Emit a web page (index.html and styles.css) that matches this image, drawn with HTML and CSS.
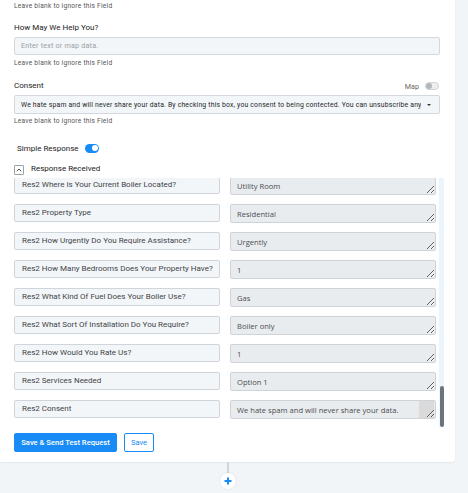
FILE: index.html
```html
<!DOCTYPE html>
<html>
<head>
<meta charset="utf-8">
<link rel="stylesheet" href="styles.css">
</head>
<body>
<div class="canvas">
  <div class="card">
    <div class="hint first">Leave blank to ignore this Field</div>

    <div class="label help-label">How May We Help You?</div>
    <div class="input">Enter text or map data.</div>
    <div class="hint">Leave blank to ignore this Field</div>

    <div class="consent-row">
      <div class="label">Consent</div>
      <div class="map">
        <span class="map-label">Map</span>
        <span class="toggle off"><span class="knob"></span></span>
      </div>
    </div>
    <div class="select">
      <span class="select-text">We hate spam and will never share your data. By checking this box, you consent to being contected. You can unsubscribe anytime.</span>
      <span class="caret"></span>
    </div>
    <div class="hint tight">Leave blank to ignore this Field</div>

    <div class="simple-row">
      <span class="simple-label">Simple Response</span>
      <span class="toggle on"><span class="knob"></span></span>
    </div>

    <div class="received-row">
      <span class="collapse">
        <svg width="6" height="4" viewBox="0 0 6 4"><path d="M0.8 3.2 L3 1 L5.2 3.2" fill="none" stroke="#333" stroke-width="0.9"/></svg>
      </span>
      <span class="received-label">Response Received</span>
    </div>

    <div class="list-wrap">
      <div class="list">
        <div class="row"><div class="key">Res2 Where Is Your Current Boiler Located?</div><textarea class="val" readonly>Utility Room</textarea></div>
        <div class="row"><div class="key">Res2 Property Type</div><textarea class="val" readonly>Residential</textarea></div>
        <div class="row"><div class="key">Res2 How Urgently Do You Require Assistance?</div><textarea class="val" readonly>Urgently</textarea></div>
        <div class="row"><div class="key">Res2 How Many Bedrooms Does Your Property Have?</div><textarea class="val" readonly>1</textarea></div>
        <div class="row"><div class="key">Res2 What Kind Of Fuel Does Your Boiler Use?</div><textarea class="val" readonly>Gas</textarea></div>
        <div class="row"><div class="key">Res2 What Sort Of Installation Do You Require?</div><textarea class="val" readonly>Boiler only</textarea></div>
        <div class="row"><div class="key">Res2 How Would You Rate Us?</div><textarea class="val" readonly>1</textarea></div>
        <div class="row"><div class="key">Res2 Services Needed</div><textarea class="val" readonly>Option 1</textarea></div>
        <div class="row"><div class="key">Res2 Consent</div><textarea class="val long" readonly>We hate spam and will never share your data. By checking this box, you consent to being contected. You can unsubscribe anytime.</textarea></div>
      </div>
      <div class="vscroll"><div class="vthumb"></div></div>
    </div>

    <div class="actions">
      <button class="btn primary">Save &amp; Send Test Request</button>
      <button class="btn outline">Save</button>
    </div>
  </div>

  <div class="connector">
    <div class="line"></div>
    <div class="plus">
      <svg width="8" height="8" viewBox="0 0 8 8"><path d="M4 0.5 V7.5 M0.5 4 H7.5" stroke="#188bf6" stroke-width="2"/></svg>
    </div>
  </div>
</div>
</body>
</html>
```

FILE: styles.css
```css
html, body {
  margin: 0;
  padding: 0;
}
body {
  width: 468px;
  height: 493px;
  overflow: hidden;
  background: #f2f5f8;
  font-family: Roboto, "Liberation Sans", sans-serif;
  color: #2d2d2d;
}
.canvas {
  display: flex;
  flex-direction: column;
  align-items: flex-start;
}
.card {
  width: 426px;
  padding: 0 15px 10px 14px;
  background: #fff;
  border-radius: 0 0 4px 0;
  box-shadow: 0 1px 2px rgba(0,0,0,0.06);
  display: flex;
  flex-direction: column;
}
.hint {
  font-size: 6.6px;
  letter-spacing: 0.25px;
  line-height: 10px;
  height: 10px;
  color: #555;
  margin-top: 3px;
  white-space: nowrap;
}
.hint.first {
  margin-top: 1px;
}
.hint.tight {
  margin-top: 2px;
}
.label {
  font-size: 8px;
  line-height: 12px;
  color: #222;
}
.help-label {
  margin-top: 11px;
}
.input {
  margin-top: 3px;
  height: 16px;
  border: 1px solid #d3d8de;
  border-radius: 2px;
  background: #f3f6f9;
  color: #9aa0a6;
  font-size: 7.2px;
  letter-spacing: 0.2px;
  line-height: 16px;
  padding-left: 6px;
}
.consent-row {
  margin-top: 12px;
  height: 12px;
  display: flex;
  align-items: center;
  justify-content: space-between;
}
.map {
  display: flex;
  align-items: center;
  gap: 6px;
  padding-right: 1px;
}
.map-label {
  font-size: 7.2px;
  color: #666;
}
.toggle {
  width: 14px;
  height: 8px;
  border-radius: 4px;
  position: relative;
  box-sizing: border-box;
}
.toggle.off {
  background: #eceef0;
  border: 1px solid #d2d5d8;
}
.toggle .knob {
  position: absolute;
  width: 6px;
  height: 6px;
  border-radius: 50%;
}
.toggle.off .knob {
  left: 0;
  top: 0;
  background: #b4b8bc;
}
.toggle.on {
  width: 14px;
  height: 9px;
  border-radius: 4.5px;
  background: #188bf6;
}
.toggle.on .knob {
  right: 1px;
  top: 1.5px;
  background: #fff;
}
.select {
  margin-top: 3px;
  height: 17px;
  border: 1px solid #d3d8de;
  border-radius: 2px;
  background: #f3f6f9;
  display: flex;
  align-items: center;
  padding: 0 8px 0 6px;
}
.select-text {
  flex: 1;
  font-size: 6.8px;
  letter-spacing: 0.2px;
  color: #1e1e1e;
  white-space: nowrap;
  overflow: hidden;
}
.caret {
  width: 0;
  height: 0;
  border-left: 2px solid transparent;
  border-right: 2px solid transparent;
  border-top: 2.5px solid #333;
  margin-left: 6px;
}
.simple-row {
  margin-top: 16px;
  height: 12px;
  display: flex;
  align-items: center;
  padding-left: 3px;
  gap: 6px;
}
.simple-label {
  font-size: 8px;
  color: #222;
}
.received-row {
  margin-top: 8px;
  height: 12px;
  display: flex;
  align-items: center;
  gap: 7px;
}
.collapse {
  width: 10px;
  height: 10px;
  box-sizing: border-box;
  border: 1px solid #9aa0a6;
  border-radius: 1px;
  display: flex;
  align-items: center;
  justify-content: center;
  margin-top: 3px;
}
.received-label {
  font-size: 8px;
  color: #222;
}
.list-wrap {
  position: relative;
  margin-top: 4px;
  height: 249px;
  margin-right: -4px;
}
.list {
  height: 249px;
  overflow: hidden;
  display: flex;
  flex-direction: column;
  justify-content: flex-end;
  gap: 9px;
  padding-bottom: 8px;
  box-sizing: border-box;
  width: 422px;
}
.row {
  display: flex;
  gap: 10px;
  flex: none;
  height: 19px;
}
.key {
  width: 206px;
  height: 18px;
  box-sizing: border-box;
  border: 1px solid #d0d5db;
  border-radius: 2px;
  background: #f3f6f9;
  font-size: 8px;
  line-height: 15px;
  padding-left: 7px;
  color: #3f4347;
  white-space: nowrap;
  overflow: hidden;
}
.val {
  width: 206px;
  height: 19px;
  box-sizing: border-box;
  border: 1px solid #cfd3d7;
  border-radius: 2px;
  background: #e9ecef;
  font-family: "Open Sans", "Liberation Sans", sans-serif;
  font-size: 7.6px;
  line-height: 11.4px;
  padding: 4px 6px 0 6px;
  margin: 0;
  color: #4a4d50;
  resize: vertical;
  overflow: hidden;
  outline: none;
}
.val.long {
  padding-right: 28px;
  background: linear-gradient(to right, #e9ecef 0, #e9ecef calc(100% - 16px), #dadada calc(100% - 16px), #dadada calc(100% - 1px), #e9ecef calc(100% - 1px));
}
.vscroll {
  position: absolute;
  left: 425px;
  top: 0;
  width: 5px;
  height: 249px;
  background: #ecf4fc;
}
.vthumb {
  position: absolute;
  left: 1px;
  bottom: 0;
  width: 4px;
  height: 41px;
  border-radius: 2px;
  background: #6b747c;
}
.actions {
  margin-top: 6px;
  display: flex;
  gap: 7px;
}
.btn {
  height: 19px;
  box-sizing: border-box;
  border-radius: 2px;
  font-family: Roboto, "Liberation Sans", sans-serif;
  font-size: 7.6px;
  padding: 0;
  margin: 0;
}
.btn.primary {
  width: 103px;
  background: #188bf6;
  border: 1px solid #188bf6;
  color: #fff;
  font-weight: 500;
}
.btn.outline {
  width: 30px;
  background: #fff;
  border: 1px solid #188bf6;
  color: #188bf6;
}
.connector {
  width: 455px;
  display: flex;
  flex-direction: column;
  align-items: center;
}
.line {
  width: 2px;
  height: 11px;
  background: #cfd5db;
}
.plus {
  width: 16px;
  height: 16px;
  border-radius: 50%;
  background: #fff;
  box-shadow: 0 0 2px rgba(0,0,0,0.12);
  display: flex;
  align-items: center;
  justify-content: center;
}
```
